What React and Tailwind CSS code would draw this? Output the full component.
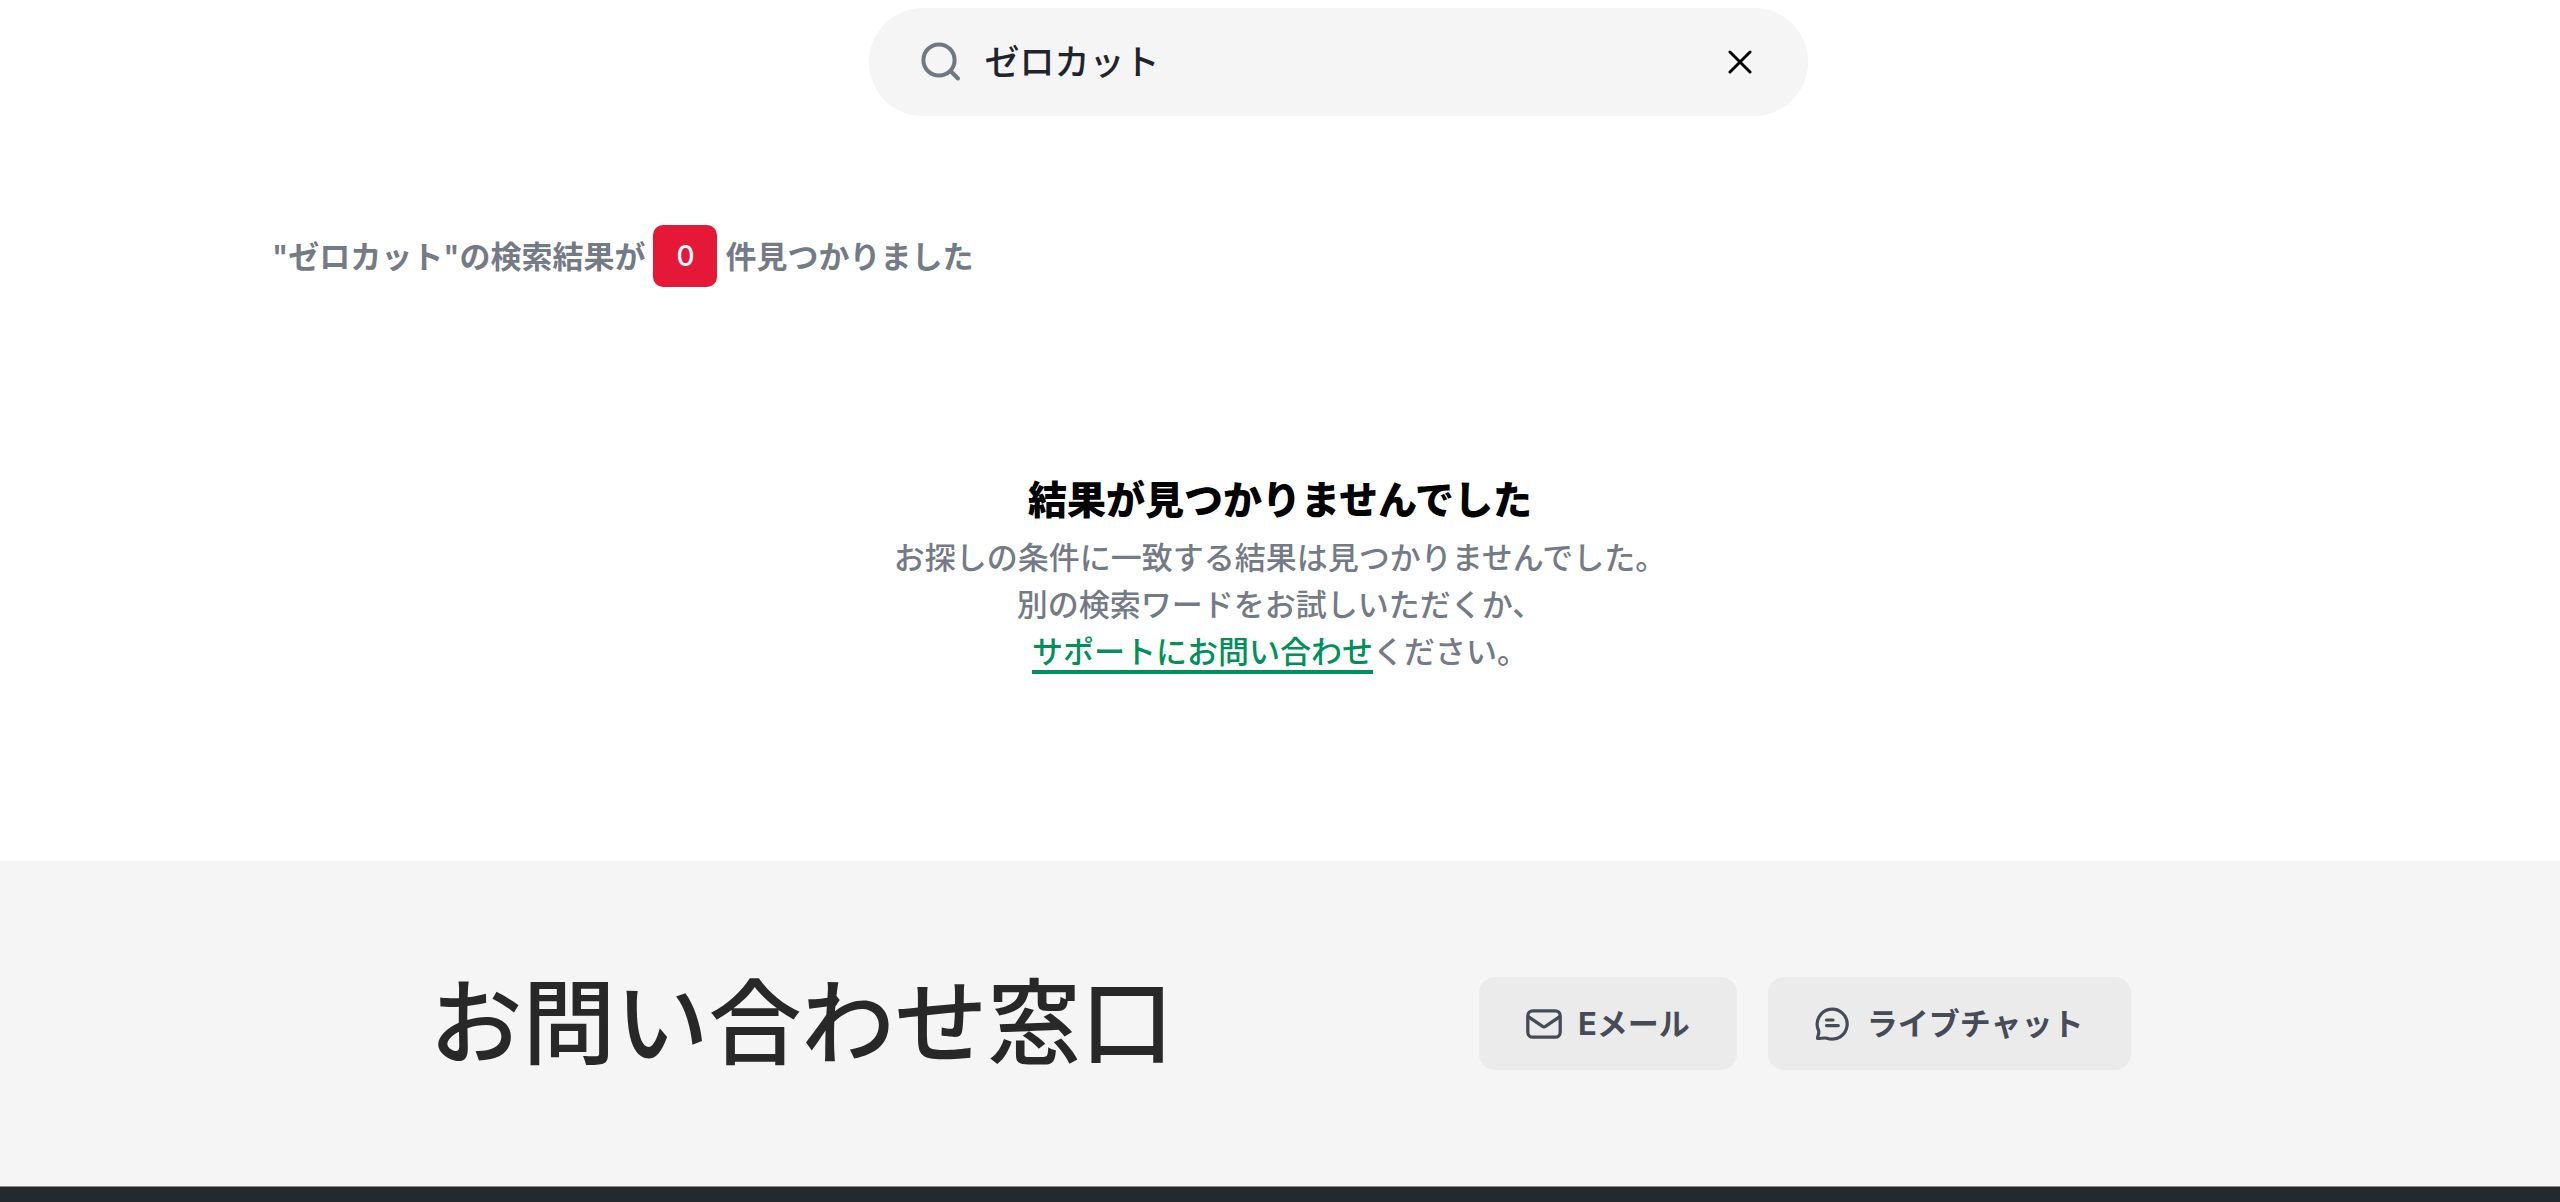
function SearchIcon() {
  return (
    <svg viewBox="0 0 40 40" className="size-10 shrink-0 text-[#717882]" fill="none" stroke="currentColor" strokeWidth="4" strokeLinecap="round" aria-hidden="true">
      <circle cx="18" cy="18" r="15.6" />
      <path d="M30 29.500 37 36.500" />
    </svg>
  );
}

function ClearIcon() {
  return (
    <svg viewBox="0 0 24 24" className="size-6" fill="none" stroke="currentColor" strokeWidth="3" strokeLinecap="round" aria-hidden="true">
      <path d="M2 2 22 22M22 2 2 22" />
    </svg>
  );
}

function MailIcon() {
  return (
    <svg viewBox="0 0 36 30" className="h-[30px] w-9 shrink-0" fill="none" stroke="currentColor" strokeWidth="3.3" strokeLinejoin="round" aria-hidden="true">
      <rect x="1.8" y="1.8" width="32.4" height="26.4" rx="5" />
      <path d="M2.2 7.6 16.2 17.200a3 3 0 0 0 3.600 0L33.800 7.600" />
    </svg>
  );
}

function ChatIcon() {
  return (
    <svg viewBox="0 0 36 36" className="size-9 shrink-0" fill="none" stroke="currentColor" strokeWidth="3.2" strokeLinecap="round" strokeLinejoin="round" aria-hidden="true">
      <path d="M3.6 24.5A15 15 0 1 1 12 32.200C9 31.500 6 32.600 2.600 32.500C2.500 29.500 4.600 27.500 3.600 24.500Z" />
      <path d="M11.500 14h6.500M11.500 19.600h11.800" />
    </svg>
  );
}

function ContactLink({ href, icon, children }) {
  return (
    <a href={href} className="flex items-center gap-4 rounded-2xl bg-[#ebebeb] px-[47px] py-[23px] text-[31px] leading-[47px] font-bold whitespace-nowrap text-[#464b57]">
      {icon}
      {children}
    </a>
  );
}

export default function App() {
  return (
    <div lang="ja" className="flex min-h-screen flex-col bg-white font-['Inter','Noto_Sans_CJK_JP',sans-serif] text-[31px] leading-[47px] font-medium text-[#747a86]">
      <header className="flex justify-center pt-2 pl-[116px]">
        <form role="search" className="flex h-[108px] w-full max-w-[939px] items-center gap-6 rounded-full bg-[#f5f5f5] pr-14 pl-[52px]">
          <label htmlFor="query" aria-label="検索">
            <SearchIcon />
          </label>
          <input id="query" type="text" defaultValue="ゼロカット" className="h-[52px] min-w-0 flex-1 bg-transparent text-[35px] leading-[52px] font-medium text-[#20242b] outline-none" />
          <button type="reset" aria-label="クリア" className="text-black">
            <ClearIcon />
          </button>
        </form>
      </header>

      <main className="mx-auto flex w-full max-w-[2016px] flex-col pb-[186px]">
        <p className="flex items-center gap-2 pt-[109px] font-semibold">
          <span>"ゼロカット"の検索結果が</span>
          <span className="flex h-[62px] w-16 items-center justify-center rounded-[10px] bg-[#e51837] text-[28px] font-medium text-white">0</span>
          <span>件見つかりました</span>
        </p>
        <section className="flex flex-col items-center pt-[184px] text-center">
          <h1 className="pb-[5px] text-[39px] leading-[58px] font-black text-black">結果が見つかりませんでした</h1>
          <p>
            お探しの条件に一致する結果は見つかりませんでした。
            <br />
            別の検索ワードをお試しいただくか、
            <br />
            <a href="#contact" className="border-b-4 border-[#00915a] text-[#00915a]">サポートにお問い合わせ</a>
            ください。
          </p>
        </section>
      </main>

      <section id="contact" className="bg-[#f5f5f5] py-[116px]">
        <div className="mx-auto flex w-full max-w-[1701px] items-center justify-between">
          <h2 className="text-[93px] leading-[93px] font-medium text-[#282828]">お問い合わせ窓口</h2>
          <div className="flex gap-[31px]">
            <ContactLink href="#mail" icon={<MailIcon />}>Eメール</ContactLink>
            <ContactLink href="#chat" icon={<ChatIcon />}>ライブチャット</ContactLink>
          </div>
        </div>
      </section>
      <footer className="flex-1 border-t border-[#85888c] bg-[#24292d]" />
    </div>
  );
}
